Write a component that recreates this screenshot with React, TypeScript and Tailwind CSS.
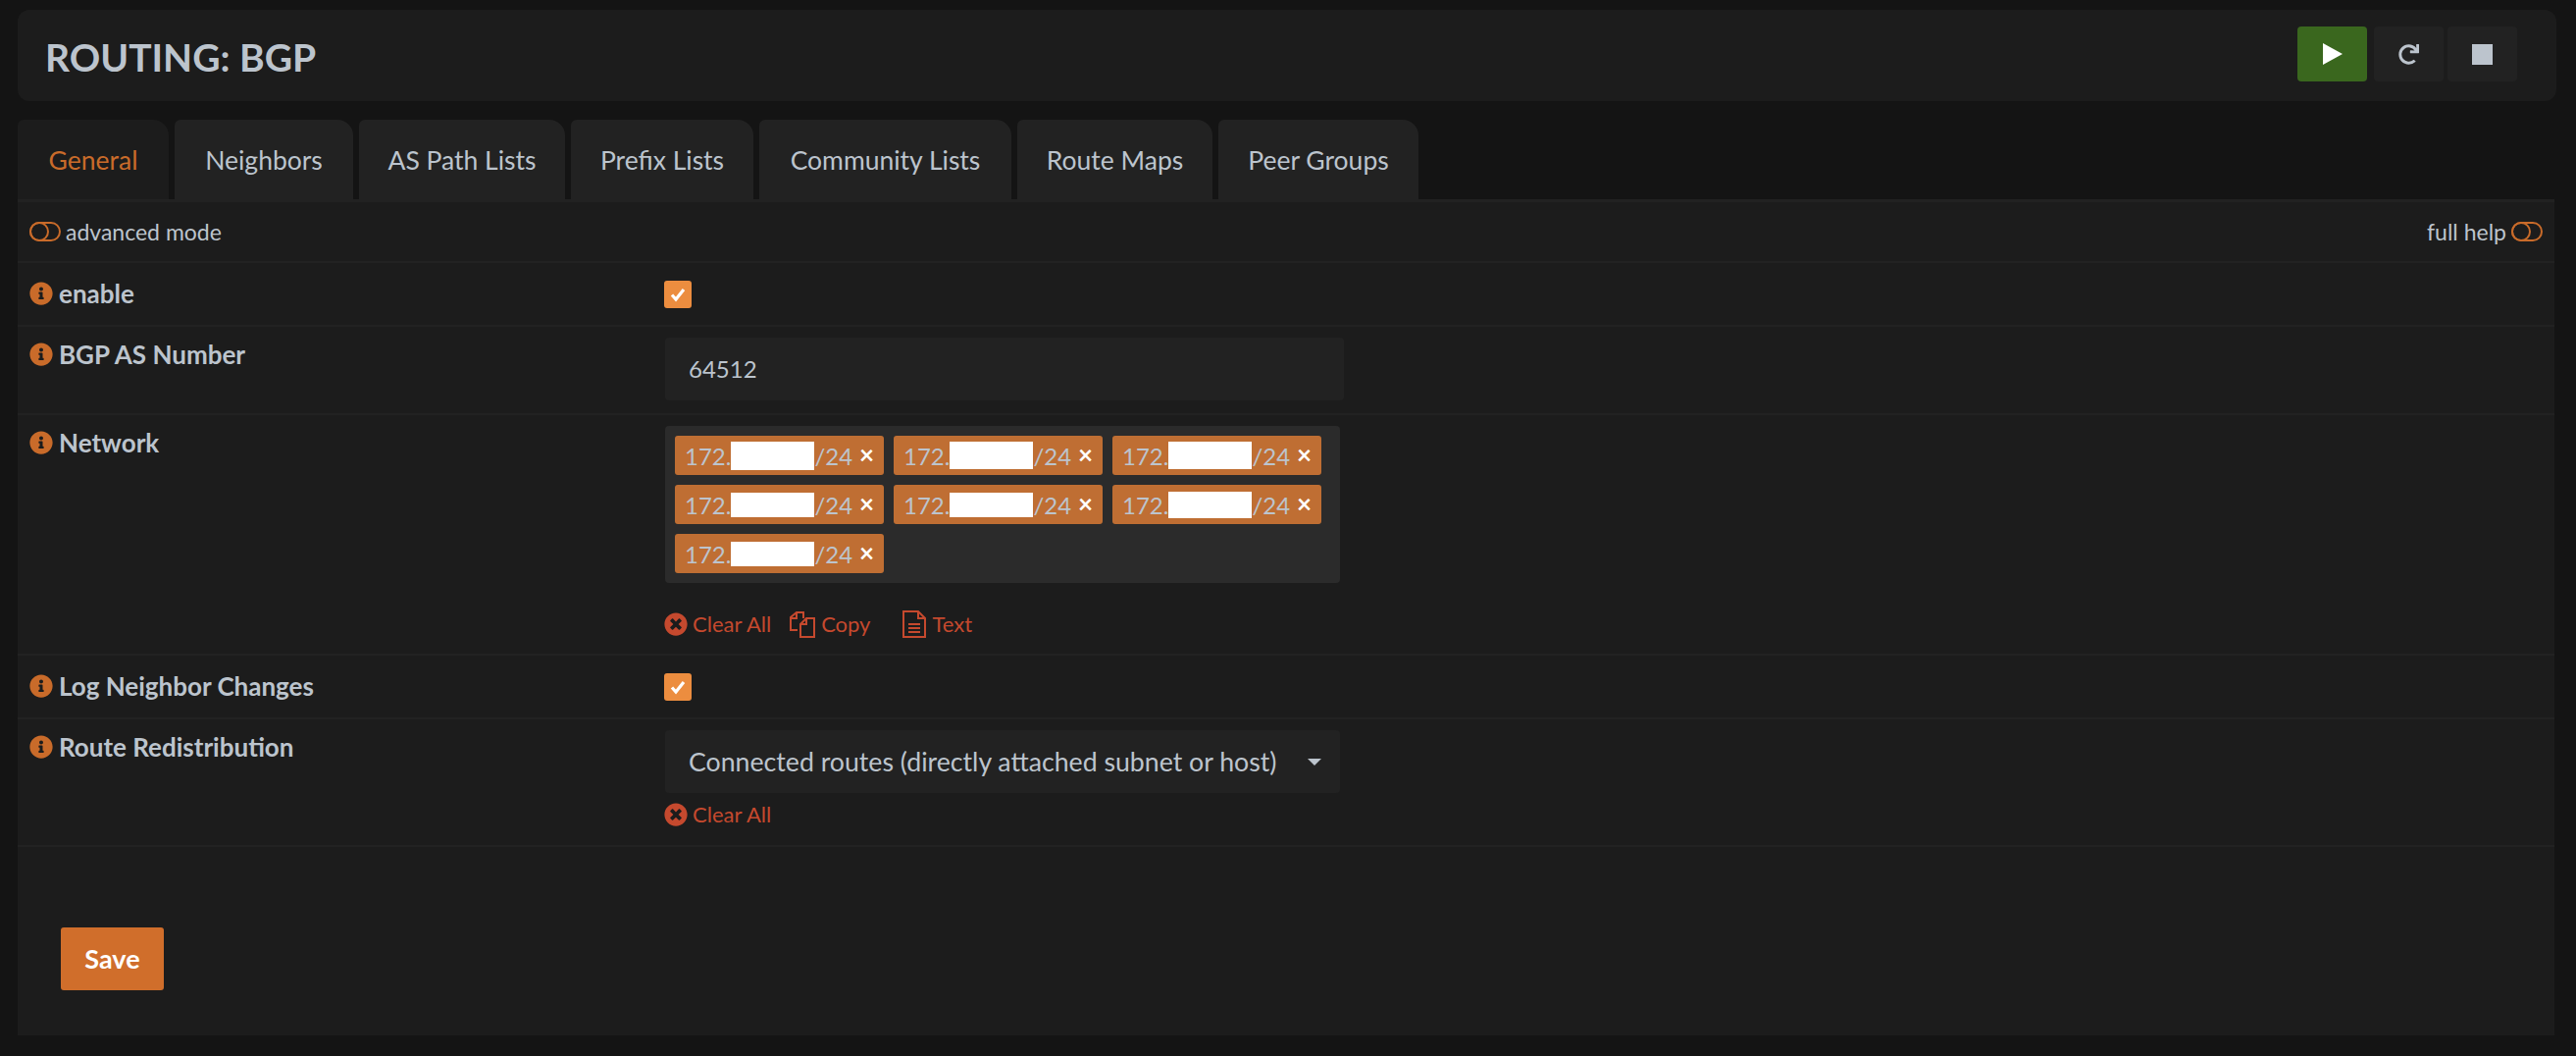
import React from 'react';
import { FaInfoCircle, FaTimesCircle, FaRedo } from 'react-icons/fa';

const tabs = [
  { label: 'General', width: 'w-[154px]' },
  { label: 'Neighbors', width: 'w-[182px]' },
  { label: 'AS Path Lists', width: 'w-[210px]' },
  { label: 'Prefix Lists', width: 'w-[186px]' },
  { label: 'Community Lists', width: 'w-[257px]' },
  { label: 'Route Maps', width: 'w-[199px]' },
  { label: 'Peer Groups', width: 'w-[204px]' },
];

const Toggle = () => (
  <svg width="32" height="20" viewBox="0 0 32 20" fill="none" stroke="#c96b2a" strokeWidth="2" className="shrink-0">
    <rect x="1" y="1" width="30" height="18" rx="9" />
    <circle cx="10" cy="10" r="9" />
  </svg>
);

const Check = () => (
  <span className="flex h-[28px] w-[28px] items-center justify-center rounded-[3px] bg-[#ec8d3f]">
    <svg width="18" height="18" viewBox="0 0 18 18" fill="none" stroke="#ffffff" strokeWidth="3.2">
      <path d="M3 9.5l4 4.5 8-10" />
    </svg>
  </span>
);

const CopyIcon = () => (
  <svg width="28" height="28" viewBox="0 0 28 28" fill="none" stroke="#c5492e" strokeWidth="2" className="shrink-0">
    <path d="M9 20H2V7l6-5h7v6" />
    <path d="M8 2v6H2" />
    <path d="M12 14l6-6h8v19H12z" />
    <path d="M18 8v6h-6" />
  </svg>
);

const TextIcon = () => (
  <svg width="24" height="28" viewBox="0 0 24 28" fill="none" stroke="#c5492e" strokeWidth="2" className="shrink-0">
    <path d="M1 1h15l7 7v19H1z" />
    <path d="M16 1v7h7" />
    <path d="M6 14h12M6 18h12M6 22h12" />
  </svg>
);

const ClearAll = () => (
  <span className="flex items-center gap-[5px] text-[#c5492e]">
    <FaTimesCircle className="h-[24px] w-[24px] shrink-0" />
    <span>Clear All</span>
  </span>
);

const Tag = ({ redact }: { redact: string }) => (
  <span className="relative flex h-[40px] w-[213px] items-center rounded-[3px] bg-[#bf6e33] pl-[10px] pt-[2px] text-[#bcc4cd]">
    <span>172.</span>
    <span className={`${redact} -mt-[2px] w-[85px] bg-white`}></span>
    <span>/24</span>
    <span className="absolute right-[10px] top-[3px] text-[26px] font-bold text-white">×</span>
  </span>
);

const Row = ({ label, labelHeight, children }: { label: string; labelHeight: string; children: React.ReactNode }) => (
  <div className="grid grid-cols-[647px_1fr] border-t-2 border-[#222222] pl-[12px]">
    <div className={`flex ${labelHeight} items-center gap-[6px] self-start text-[26px] font-bold`}>
      <FaInfoCircle className="h-[24px] w-[24px] shrink-0 text-[#c96b2a]" />
      <span>{label}</span>
    </div>
    <div>{children}</div>
  </div>
);

const App = () => {
  return (
    <div className="h-[1076px] overflow-hidden bg-[#141414] pl-[18px] pr-[20px] pt-[10px] font-['Lato','Liberation_Sans',sans-serif] text-[24px] leading-[32px] text-[#bcc4cd]">
      {/* Page title */}
      <header className="flex h-[93px] items-center justify-between rounded-[12px] bg-[#1c1c1c] pl-[28px] pr-[40px]">
        <h1 className="mt-[3px] text-[39px] font-bold">ROUTING: BGP</h1>
        <div className="mb-[3px] flex items-center">
          <button className="mr-[7px] flex h-[56px] w-[71px] items-center justify-center rounded-[4px] bg-[#3a671e]">
            <svg width="20" height="22" viewBox="0 0 20 22"><path d="M0 0l20 11L0 22z" fill="#ffffff" /></svg>
          </button>
          <button className="mr-[4px] flex h-[56px] w-[71px] items-center justify-center rounded-[4px] bg-[#222222]">
            <FaRedo className="h-[21px] w-[21px]" />
          </button>
          <button className="flex h-[56px] w-[71px] items-center justify-center rounded-[4px] bg-[#222222]">
            <span className="h-[21px] w-[21px] bg-[#bcc4cd]"></span>
          </button>
        </div>
      </header>

      <div className="mr-[2px]">
        {/* Tabs */}
        <nav className="mt-[19px] flex h-[81px] gap-[6px] text-[26.5px]">
          {tabs.map((tab, i) => (
            <a
              key={tab.label}
              className={`flex ${tab.width} items-center justify-center rounded-tl-[6px] rounded-tr-[16px] ${i === 0 ? 'bg-[#1c1c1c] text-[#c96b2a]' : 'bg-[#222222]'}`}
            >
              {tab.label}
            </a>
          ))}
        </nav>

        <main className="h-[852px] border-t-[3px] border-[#222222] bg-[#1c1c1c]">
          <div className="flex h-[60px] items-center justify-between px-[12px] text-[23px]">
            <span className="flex items-center gap-[5px]"><Toggle />advanced mode</span>
            <span className="flex items-center gap-[5px]">full help<Toggle /></span>
          </div>

          <Row label="enable" labelHeight="h-[62px]">
            <div className="flex h-[63px] items-center"><Check /></div>
          </Row>

          <Row label="BGP AS Number" labelHeight="h-[56px]">
            <div className="pb-[13px] pt-[11px]">
              <div className="ml-[1px] flex h-[64px] w-[692px] items-center rounded-[4px] bg-[#222222] pl-[24px]">64512</div>
            </div>
          </Row>

          <Row label="Network" labelHeight="h-[56px]">
            <div className="pb-[14px] pt-[11px]">
              <div className="ml-[1px] grid h-[160px] w-[688px] grid-cols-[213px_213px_213px] content-start gap-x-[10px] gap-y-[10px] rounded-[4px] bg-[#2b2b2b] p-[10px]">
                <Tag redact="h-[29px]" />
                <Tag redact="h-[28px]" />
                <Tag redact="h-[28px]" />
                <Tag redact="h-[25px]" />
                <Tag redact="h-[25px]" />
                <Tag redact="h-[27px]" />
                <Tag redact="h-[25px]" />
              </div>
              <div className="mt-[26px] flex h-[32px] items-center text-[22px] text-[#c5492e]">
                <ClearAll />
                <span className="ml-[18px] flex items-center gap-[5px]"><CopyIcon />Copy</span>
                <span className="ml-[33px] flex items-center gap-[6px]"><TextIcon />Text</span>
              </div>
            </div>
          </Row>

          <Row label="Log Neighbor Changes" labelHeight="h-[62px]">
            <div className="flex h-[63px] items-center"><Check /></div>
          </Row>

          <Row label="Route Redistribution" labelHeight="h-[56px]">
            <div className="pb-[15px] pt-[11px]">
              <div className="ml-[1px] flex h-[64px] w-[688px] items-center justify-between rounded-[4px] bg-[#222222] pl-[24px] pr-[19px] text-[26.7px]">
                <span>Connected routes (directly attached subnet or host)</span>
                <span className="h-0 w-0 border-x-[7px] border-t-[7px] border-x-transparent border-t-[#bcc4cd]"></span>
              </div>
              <div className="mt-[6px] flex h-[32px] items-center text-[22px]"><ClearAll /></div>
            </div>
          </Row>

          <div className="border-t-2 border-[#222222] pl-[44px] pt-[82px]">
            <button className="h-[64px] w-[105px] rounded-[3px] bg-[#d06e2b] text-[27px] font-bold text-white">Save</button>
          </div>
        </main>
      </div>
    </div>
  );
};

export default App;
